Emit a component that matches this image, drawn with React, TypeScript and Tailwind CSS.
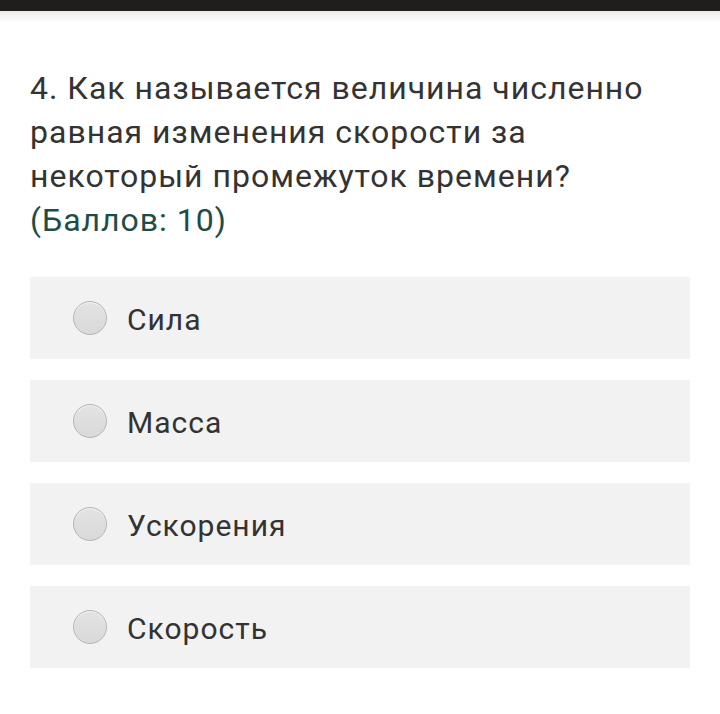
import React from "react";

const options = ["Сила", "Масса", "Ускорения", "Скорость"];

export default function App() {
  return (
    <div className="w-[720px] h-[714px] bg-white overflow-hidden" style={{ fontFamily: "Roboto, 'Noto Sans', sans-serif" }}>
      <div className="h-[11px] bg-[#1f1e1c]" />
      <div className="h-[12px] bg-gradient-to-b from-[#ecebe8] to-white" />
      <div className="px-[30px] pt-[43px]">
        <div className="text-[32px] leading-[44px] tracking-[1px] text-[#333333] pr-[20px]">
          4. Как называется величина численно равная изменения скорости за некоторый промежуток времени?
          <div className="text-[#1e4d47]">(Баллов: 10)</div>
        </div>
        <div className="mt-[35px] w-[660px] flex flex-col gap-[21px]">
          {options.map((o) => (
            <div key={o} className="h-[82px] bg-[#f2f2f2] flex items-center pl-[43px]">
              <div className="w-[34px] h-[34px] rounded-full border border-[#b5b5b5] bg-gradient-to-b from-[#e3e3e3] to-[#d9d9d9] shadow-[inset_0_1px_1px_rgba(255,255,255,0.6)]" />
              <span className="ml-[20px] mt-[3px] text-[30px] tracking-[1px] text-[#333333]">{o}</span>
            </div>
          ))}
        </div>
      </div>
    </div>
  );
}
